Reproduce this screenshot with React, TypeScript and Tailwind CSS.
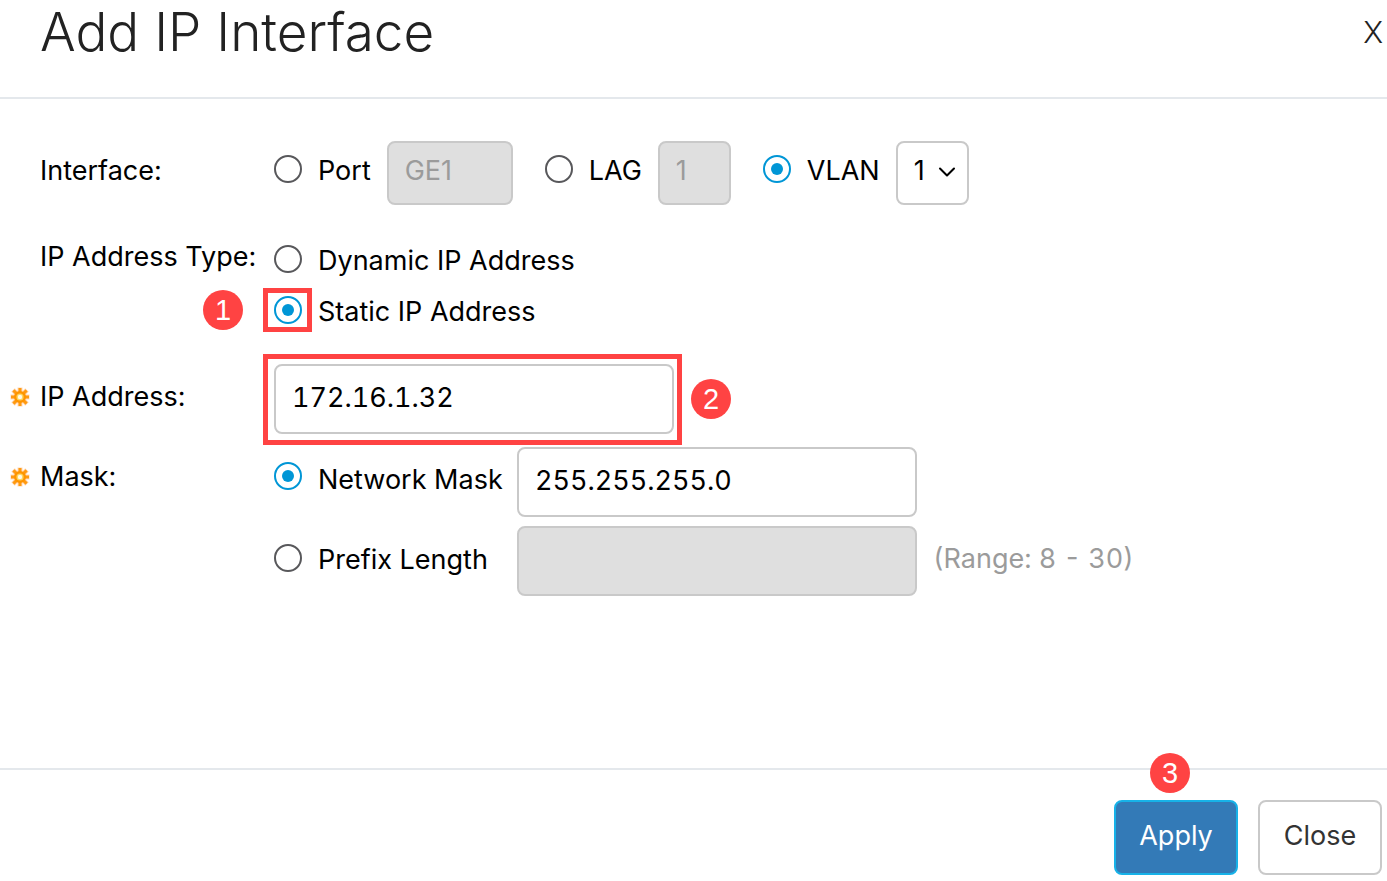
import React, { useState } from "react";
import { ChevronDown } from "lucide-react";

type RadioProps = {
  id: string;
  name: string;
  checked: boolean;
  onSelect: () => void;
};

function Radio({ id, name, checked, onSelect }: RadioProps) {
  return (
    <input
      type="radio"
      id={id}
      name={name}
      checked={checked}
      onChange={onSelect}
      className="grid size-7 shrink-0 appearance-none place-items-center rounded-full border-2 border-[#58585b] bg-white checked:border-[#0096d6] before:size-3 before:rounded-full checked:before:bg-[#0096d6]"
    />
  );
}

function Step({ n }: { n: number }) {
  return (
    <span className="flex size-10 items-center justify-center rounded-full bg-[#ff4343] font-['Liberation_Sans',Arial,sans-serif] text-[29px] leading-10 font-normal text-white">
      {n}
    </span>
  );
}

// Orange star in front of mandatory fields
function Required() {
  return (
    <svg viewBox="0 0 20 20" className="size-5 shrink-0" aria-hidden="true">
      <g stroke="#ffd9b8" strokeWidth="5">
        <path d="M10 0.5v19M0.5 10h19M3 3l14 14M17 3L3 17" />
      </g>
      <g stroke="#ff9a10" strokeWidth="3">
        <path d="M10 1v18M1 10h18M3.4 3.4l13.2 13.2M16.6 3.4L3.4 16.6" />
      </g>
      <circle cx="10" cy="10" r="6" fill="#ff9500" />
      <circle cx="10" cy="10" r="3.6" fill="#ffd45c" />
      <circle cx="10" cy="10" r="2.2" fill="#fffbe8" />
    </svg>
  );
}

const box = "rounded-lg border-2 border-[#c9c9c9] bg-white outline-none disabled:bg-[#dfdfdf] disabled:text-[#9b9b9b] disabled:opacity-100";
const field = `${box} h-[70px] w-[400px] px-4 pb-1 tabular-nums`;

export default function App() {
  const [iface, setIface] = useState("vlan");
  const [ipType, setIpType] = useState("static");
  const [maskType, setMaskType] = useState("mask");
  const [ip, setIp] = useState("172.16.1.32");
  const [mask, setMask] = useState("255.255.255.0");

  return (
    <div className="flex min-h-screen flex-col bg-white font-['Inter',sans-serif] text-[27px] leading-9 font-[370] text-black">
      <header className="flex items-start justify-between border-b-2 border-[#e4e8ec] pr-1 pb-8 pl-10 text-[#222]">
        <h1 className="text-[53px] leading-[65px] font-[330]">Add IP Interface</h1>
        <button type="button" aria-label="Close dialog" className="mt-3.5 text-[30px] leading-9 font-[330]">X</button>
      </header>

      <form className="flex grow flex-col pt-[42px] pb-10" onSubmit={(e) => e.preventDefault()}>
        {/* Interface */}
        <div className="flex items-center">
          <div className="w-[274px] shrink-0 pb-1 pl-10">Interface:</div>
          <div className="flex items-center gap-8">
            <div className="flex items-center gap-4">
              <div className="flex items-center gap-4 pb-2">
                <Radio id="port" name="iface" checked={iface === "port"} onSelect={() => setIface("port")} />
                <label htmlFor="port" className="pt-1">Port</label>
              </div>
              <select aria-label="Port number" disabled={iface !== "port"} className={`${box} h-16 w-[126px] appearance-none px-4 pb-1`}>
                <option>GE1</option>
              </select>
            </div>
            <div className="flex items-center gap-4">
              <div className="flex items-center gap-4 pb-2">
                <Radio id="lag" name="iface" checked={iface === "lag"} onSelect={() => setIface("lag")} />
                <label htmlFor="lag" className="pt-1">LAG</label>
              </div>
              <select aria-label="LAG number" disabled={iface !== "lag"} className={`${box} h-16 w-[73px] appearance-none px-4 pb-1`}>
                <option>1</option>
              </select>
            </div>
            <div className="flex items-center gap-4">
              <div className="flex items-center gap-4 pb-2">
                <Radio id="vlan" name="iface" checked={iface === "vlan"} onSelect={() => setIface("vlan")} />
                <label htmlFor="vlan" className="pt-1">VLAN</label>
              </div>
              <div className="relative">
                <select aria-label="VLAN number" disabled={iface !== "vlan"} className={`${box} h-16 w-[73px] appearance-none px-4 pb-1`}>
                  <option>1</option>
                </select>
                <ChevronDown className="pointer-events-none absolute top-[17px] right-2 size-7" strokeWidth={1.75} />
              </div>
            </div>
          </div>
        </div>

        {/* IP address type */}
        <div className="mt-7 flex items-start">
          <div className="w-[274px] shrink-0 pt-1.5 pl-10">IP Address Type:</div>
          <div>
            <div className="flex h-[51px] items-center gap-4">
              <Radio id="dynamic" name="ipType" checked={ipType === "dynamic"} onSelect={() => setIpType("dynamic")} />
              <label htmlFor="dynamic" className="pt-1">Dynamic IP Address</label>
            </div>
            <div className="flex h-[51px] items-center gap-4">
              <div className="relative">
                <Radio id="static" name="ipType" checked={ipType === "static"} onSelect={() => setIpType("static")} />
                <div className="pointer-events-none absolute -inset-y-2 -right-2.5 -left-[11px] border-5 border-[#ff4343]" />
                <div className="absolute -top-1.5 right-[59px]">
                  <Step n={1} />
                </div>
              </div>
              <label htmlFor="static" className="pt-1">Static IP Address</label>
            </div>
          </div>
        </div>

        {/* IP address */}
        <div className="mt-[29px] flex items-center">
          <label htmlFor="ip" className="flex w-[274px] shrink-0 items-center pb-1 pl-2.5">
            <Required />
            <span className="pl-2.5">IP Address:</span>
          </label>
          <div className="relative">
            <input id="ip" type="text" value={ip} onChange={(e) => setIp(e.target.value)} className={`${field} block`} />
            <div className="pointer-events-none absolute -top-2.5 -right-2 -bottom-[11px] -left-[11px] border-5 border-[#ff4343]" />
            <div className="absolute top-[15px] left-[417px]">
              <Step n={2} />
            </div>
          </div>
        </div>

        {/* Mask */}
        <div className="mt-[13px] flex items-start">
          <div className="flex w-[274px] shrink-0 items-center pt-3 pl-2.5">
            <Required />
            <span className="pl-2.5">Mask:</span>
          </div>
          <div className="flex flex-col gap-[9px]">
            <div className="flex items-center">
              <div className="flex w-[243px] items-center gap-4 pb-3">
                <Radio id="mask" name="maskType" checked={maskType === "mask"} onSelect={() => setMaskType("mask")} />
                <label htmlFor="mask" className="pt-2">Network Mask</label>
              </div>
              <input
                type="text"
                aria-label="Network Mask value"
                disabled={maskType !== "mask"}
                value={mask}
                onChange={(e) => setMask(e.target.value)}
                className={field}
              />
            </div>
            <div className="flex items-center">
              <div className="flex w-[243px] items-center gap-4 pb-1.5">
                <Radio id="prefix" name="maskType" checked={maskType === "prefix"} onSelect={() => setMaskType("prefix")} />
                <label htmlFor="prefix" className="pt-1">Prefix Length</label>
              </div>
              <input type="text" aria-label="Prefix Length value" disabled={maskType !== "prefix"} className={field} />
              <span className="pb-1 pl-4 text-[#9b9b9b] tabular-nums">(Range: 8 - 30)</span>
            </div>
          </div>
        </div>
      </form>

      <footer className="flex justify-end gap-5 border-t-2 border-[#e4e8ec] pt-[30px] pr-[5px] pb-1.5">
        <div className="relative">
          <button type="submit" className="h-[75px] w-[124px] rounded-lg border-2 border-[#17b2e8] bg-[#337ab7] pb-1 text-white">
            Apply
          </button>
          <div className="absolute -top-[47px] left-9">
            <Step n={3} />
          </div>
        </div>
        <button type="button" className="h-[75px] w-[124px] rounded-lg border-2 border-[#c9c9c9] bg-white pb-1 text-[#333]">
          Close
        </button>
      </footer>
    </div>
  );
}
